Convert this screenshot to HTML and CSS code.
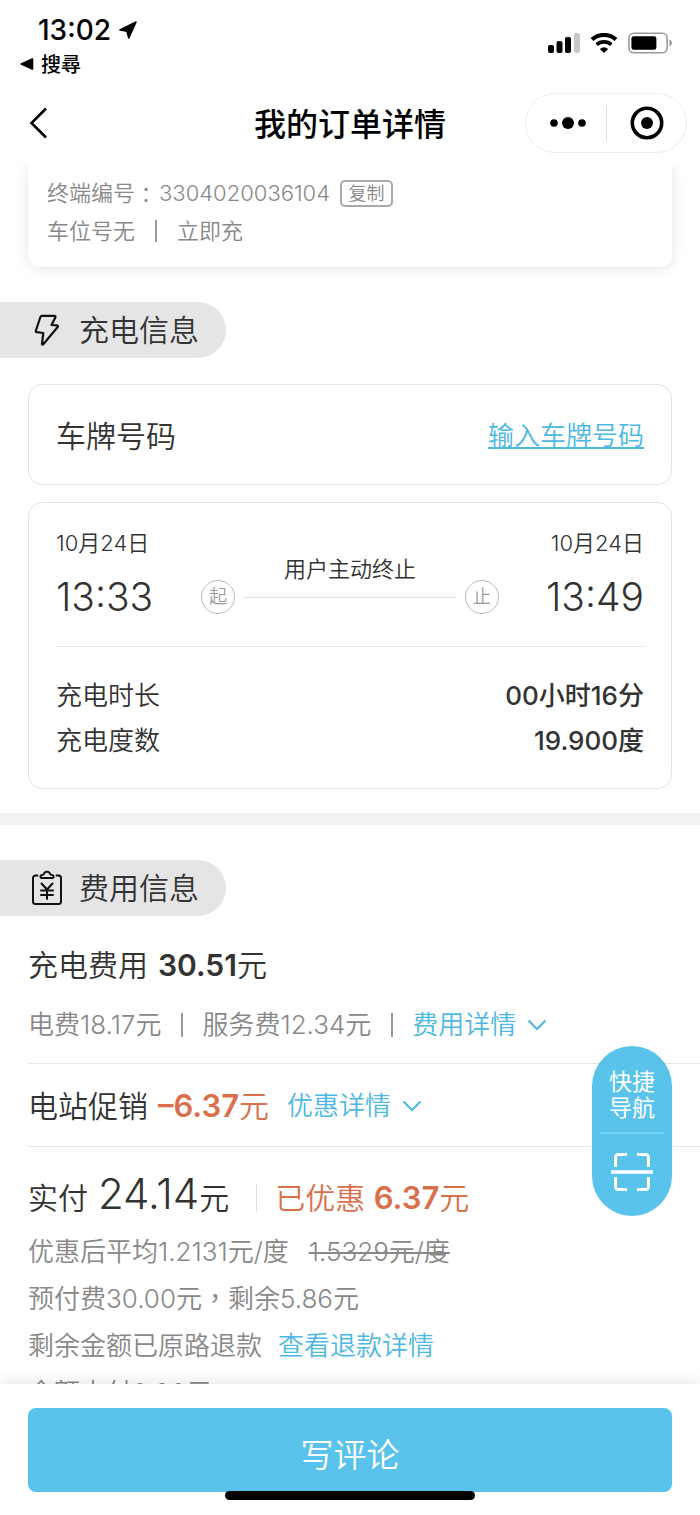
FILE: index.html
```html
<!DOCTYPE html>
<html lang="zh-CN">
<head>
<meta charset="utf-8">
<meta name="viewport" content="width=device-width, initial-scale=1">
<title>我的订单详情</title>
<link rel="stylesheet" href="styles.css">
</head>
<body>
<div class="app">
  <header class="header">
    <div class="status">
      <div class="status-left">
        <div class="clock">13:02
          <svg class="locate" viewBox="0 0 18 18" aria-hidden="true"><path d="M17 1 9.800 17 8 10.200 1 9z" stroke="#000" stroke-width="1.600" stroke-linejoin="round"/></svg>
        </div>
        <a class="back-app" href="#"><svg class="tri" viewBox="0 0 14 12" aria-hidden="true"><path d="M12.500 1v10L1.200 6z" stroke="#000" stroke-width="1.600" stroke-linejoin="round"/></svg>搜尋</a>
      </div>
      <div class="status-right" aria-hidden="true">
        <svg class="signal" viewBox="0 0 32 20"><rect x="0" y="12" width="6" height="8" rx="2"/><rect x="8.500" y="8" width="6" height="12" rx="2"/><rect x="17" y="4" width="6" height="16" rx="2"/><rect x="26" y="0" width="6" height="20" rx="2" fill="#c8c8c8"/></svg>
        <svg class="wifi" viewBox="0 0 28 20"><path d="M2 6.500a18 18 0 0 1 24 0" fill="none" stroke="#000" stroke-width="4"/><path d="M6.700 11.700a11 11 0 0 1 14.600 0" fill="none" stroke="#000" stroke-width="3.800"/><path d="M9.800 16a6.500 6.500 0 0 1 8.400 0L14 20z"/></svg>
        <svg class="battery" viewBox="0 0 46 22"><rect x="1" y="1" width="39" height="20" rx="5" fill="#fff" stroke="#999" stroke-width="1.600"/><rect x="3.500" y="4" width="25.500" height="14" rx="2.500"/><path d="M42.500 7.500c3 1.500 3 5.500 0 7z" fill="#888"/></svg>
      </div>
    </div>
    <div class="nav">
      <button class="back" aria-label="返回"><svg viewBox="0 0 20 32"><path d="M18 1.500 3.500 16 18 30.500" fill="none" stroke="#000" stroke-width="2.600"/></svg></button>
      <h1 class="title">我的订单详情</h1>
      <div class="capsule">
        <button class="cap-btn" aria-label="更多"><svg class="dots" viewBox="0 0 36 12"><circle cx="4" cy="6" r="3.800"/><circle cx="18" cy="6" r="6"/><circle cx="32" cy="6" r="3.800"/></svg></button>
        <button class="cap-btn cap-close" aria-label="关闭"><svg class="target" viewBox="0 0 34 34"><circle cx="17" cy="17" r="14.700" fill="none" stroke="#000" stroke-width="3.600"/><circle cx="17" cy="17" r="6"/></svg></button>
      </div>
    </div>
  </header>

  <main class="content">
    <section class="station">
      <div class="station-row">终端编号<span class="tc" lang="zh-TW">：</span><span class="code">3304020036104</span><button class="copy">复制</button></div>
      <div class="station-row">车位号无<i class="bar bar-wide"></i>立即充</div>
    </section>

    <h2 class="pill"><svg class="pill-icon" viewBox="0 0 32 36" aria-hidden="true"><path d="M11 3.800h12.200c1.200 0 1.600.6 1.100 1.600L20.500 13l5.200.4c1.300.1 1.600.9.800 1.800L12.300 32.300c-.8.8-1.500.4-1.300-.7l1.300-10.600-6.500-.8c-.9-.1-1.200-.8-.9-1.700L9.400 5c.3-.9.800-1.200 1.600-1.200z" fill="none" stroke="#111" stroke-width="2.200" stroke-linejoin="round"/></svg>充电信息</h2>

    <section class="card plate">
      <span class="label-lg">车牌号码</span>
      <a class="plate-link" href="#">输入车牌号码</a>
    </section>

    <section class="card session">
      <div class="times">
        <div class="point"><span class="date">10月24日</span><span class="time">13:33</span></div>
        <div class="track">
          <span class="badge">起</span>
          <div class="reason">用户主动终止</div>
          <span class="badge">止</span>
        </div>
        <div class="point point-end"><span class="date">10月24日</span><span class="time">13:49</span></div>
      </div>
      <dl class="stats">
        <div class="stat"><dt>充电时长</dt><dd>00小时16分</dd></div>
        <div class="stat"><dt>充电度数</dt><dd>19.900度</dd></div>
      </dl>
    </section>

    <div class="strip"></div>

    <h2 class="pill"><svg class="pill-icon" viewBox="0 0 32 36" aria-hidden="true"><g fill="none" stroke="#111" stroke-width="2" stroke-linecap="round" stroke-linejoin="round"><path d="M6.500 5.500H4.500A2.500 2.500 0 0 0 2 8v23.500A2.500 2.500 0 0 0 4.500 34h23a2.500 2.500 0 0 0 2.500-2.500V8A2.500 2.500 0 0 0 27.500 5.500h-2"/><path d="M10.500 8h11c1.500 0 1.500-2.600-.5-3-1-.3-1.700-.4-2-1.200-.8-2.600-5.200-2.600-6 0-.3.800-1 .9-2 1.200-2 .4-2 3-.5 3z"/><path d="m10.500 13.500 5.500 6 5.500-6M16 19.500V29M10 20.500h12M10 25h12"/></g></svg>费用信息</h2>

    <section class="fees">
      <div class="fee-block">
        <div class="fee-line">充电费用<span class="amount"><b>30.51</b>元</span></div>
        <div class="fee-sub">电费18.17元<i class="bar"></i>服务费12.34元<i class="bar"></i><a class="more" href="#">费用详情<svg class="chev" viewBox="0 0 20 12" aria-hidden="true"><path d="m1.500 1.500 8.500 8.500 8.500-8.500"/></svg></a></div>
      </div>
      <div class="fee-block promo">
        <div class="fee-line">电站促销<span class="amount orange"><b>–6.37</b>元</span><a class="more" href="#">优惠详情<svg class="chev" viewBox="0 0 20 12" aria-hidden="true"><path d="m1.500 1.500 8.500 8.500 8.500-8.500"/></svg></a></div>
      </div>
      <div class="paid">
        <div class="paid-line">实付<span class="total">24.14</span>元<span class="saved orange">已优惠 <b>6.37</b>元</span></div>
        <p class="note">优惠后平均1.2131元/度<s>1.5329元/度</s></p>
        <p class="note">预付费30.00元<span class="tc" lang="zh-TW">，</span>剩余5.86元</p>
        <p class="note">剩余金额已原路退款<a class="note-link" href="#">查看退款详情</a></p>
        <p class="note">余额支付0.00元</p>
      </div>
    </section>
  </main>

  <aside class="quick">
    <button class="quick-nav">快捷<br>导航</button>
    <button class="quick-scan" aria-label="扫码"><svg viewBox="0 0 44 38"><g fill="none" stroke="#fff" stroke-width="3"><path d="M17 1.500H8.500a3 3 0 0 0-3 3V14M27 1.500h8.500a3 3 0 0 1 3 3V14M17 36.500H8.500a3 3 0 0 1-3-3V24M27 36.500h8.500a3 3 0 0 0 3-3V24"/><path d="M1 19h42" stroke-width="3.400"/></g></svg></button>
  </aside>

  <footer class="footer">
    <button class="review">写评论</button>
    <div class="home"></div>
  </footer>
</div>
</body>
</html>
```
FILE: styles.css
```css
* { box-sizing: border-box; }

body {
  margin: 0;
  background: #fff;
  color: #333;
  font-family: Inter, "Noto Sans CJK SC", sans-serif;
  font-weight: 350;
}

h1, h2, p, dl, dd { margin: 0; }

button {
  margin: 0;
  padding: 0;
  border: 0;
  background: none;
  color: inherit;
  font: inherit;
}

a { color: #4db8e2; text-decoration: none; }
i { font-style: normal; }
svg { display: block; }
b { font-weight: 600; }

.app {
  position: relative;
  display: flex;
  flex-direction: column;
  height: 100vh;
  overflow: hidden;
}

/* Status bar and navigation */
.header { flex: none; color: #000; padding-bottom: 11px; }

.status {
  display: flex;
  justify-content: space-between;
  height: 93px;
  padding: 14px 27px 0 20px;
}

.clock {
  display: flex;
  align-items: center;
  gap: 8px;
  padding-left: 18px;
  font-size: 28px;
  font-weight: 500;
  line-height: 32px;
}

.locate { width: 18px; height: 18px; }

.back-app {
  display: flex;
  align-items: center;
  gap: 7px;
  color: #000;
  font-family: "Noto Sans CJK TC", sans-serif;
  font-size: 20px;
  font-weight: 500;
  line-height: 36px;
}

.tri { width: 14px; height: 12px; }

.status-right { display: flex; align-items: center; gap: 10px; height: 58px; }
.signal { width: 32px; height: 20px; }
.wifi { width: 28px; height: 20px; }
.battery { width: 45px; height: 22px; }

.nav {
  display: grid;
  grid-template-columns: 1fr auto 1fr;
  align-items: center;
  padding: 0 13px;
}

.back { justify-self: start; padding-left: 15px; }
.back svg { width: 20px; height: 32px; }
.title { padding-top: 4px; font-size: 32px; font-weight: 500; line-height: 48px; }

.capsule {
  justify-self: end;
  display: flex;
  align-items: center;
  width: 162px;
  height: 60px;
  border: 1px solid #ececec;
  border-radius: 30px;
}

.cap-btn {
  display: flex;
  align-items: center;
  justify-content: center;
  width: 80px;
  height: 36px;
  padding-left: 4px;
}

.cap-close { padding: 0; border-left: 1px solid #ddd; }
.dots { width: 36px; height: 12px; }
.target { width: 34px; height: 34px; }

/* Scrolled content */
.content { flex: 1; min-height: 0; overflow: hidden; }

.station {
  margin: 0 28px;
  padding: 10px 19px 17px;
  border-radius: 0 0 12px 12px;
  box-shadow: 0 2px 14px rgba(0, 0, 0, 0.1);
  color: #888;
  font-size: 22px;
}

.station-row { display: flex; align-items: center; line-height: 38px; }
.code { margin-left: 2px; }

.copy {
  width: 53px;
  margin-left: 10px;
  border: 2px solid #aaa;
  border-radius: 5px;
  font-size: 18px;
  line-height: 23px;
}

.bar { width: 2px; height: 24px; margin: 0 19px 0 20px; background: #999; }
.bar-wide { height: 22px; margin: 0 20px; }

.pill {
  display: flex;
  align-items: center;
  gap: 16px;
  width: 226px;
  height: 56px;
  margin-top: 35px;
  padding-left: 31px;
  border-radius: 0 28px 28px 0;
  background: #e5e5e5;
  font-size: 30px;
  font-weight: 350;
  line-height: 54px;
}

.pill-icon { width: 32px; height: 36px; }

.card {
  margin: 0 28px;
  border: 1px solid #e4e4e4;
  border-radius: 14px;
}

.plate {
  display: flex;
  align-items: center;
  justify-content: space-between;
  margin-top: 26px;
  padding: 30px 27px 27px;
  line-height: 42px;
}

.label-lg { font-size: 30px; }
.plate-link { font-size: 26px; text-decoration: underline; text-decoration-thickness: 2px; text-underline-offset: 2px; }

.session { margin-top: 17px; padding: 0 27px; }

.times {
  display: flex;
  justify-content: space-between;
  height: 144px;
  padding-top: 24px;
  border-bottom: 1px solid #e8e8e8;
}

.point { display: flex; flex-direction: column; width: 145px; }
.point-end { align-items: flex-end; }
.date { font-size: 22px; line-height: 32px; }
.time { font-size: 39px; line-height: 76px; }

.track {
  display: flex;
  align-items: flex-start;
  gap: 8px;
  flex: 1;
  padding-top: 22px;
}

.badge {
  width: 34px;
  height: 34px;
  margin-top: 31px;
  border: 1px solid #bbb;
  border-radius: 50%;
  color: #999;
  font-size: 18px;
  line-height: 32px;
  text-align: center;
}

.reason {
  flex: 1;
  height: 49px;
  border-bottom: 1px solid #e4e4e4;
  font-size: 22px;
  line-height: 40px;
  text-align: center;
}

.stats { padding: 26px 0 25px; font-size: 26px; line-height: 45px; }
.stat { display: flex; justify-content: space-between; }
.stat dd { font-weight: 500; }

.strip { height: 12px; margin-top: 24px; background: #f2f2f2; }

/* Fees */
.fees { padding-left: 28px; color: #333; }
.fee-block { border-bottom: 1px solid #e8e8e8; }

.fee-line {
  display: flex;
  align-items: center;
  padding-top: 24px;
  font-size: 30px;
  line-height: 50px;
}

.amount { margin-left: 10px; }
.orange { color: #d9704a; }
.orange b { font-size: 31px; line-height: 28px; }
.fee-sub { display: flex; align-items: center; padding: 11px 0 14px; color: #888; font-size: 26px; line-height: 48px; }
.more { display: flex; align-items: center; gap: 11px; font-size: 26px; }
.chev { width: 20px; height: 12px; fill: none; stroke: #4db8e2; stroke-width: 2; }
.promo .fee-line { padding: 17px 0 15px; }
.promo .more { margin-left: 18px; }

.paid-line { display: flex; align-items: baseline; padding-top: 21px; font-size: 30px; line-height: 60px; }
.total { margin-left: 10px; font-size: 42px; line-height: 42px; }
.saved { margin-left: 27px; padding-left: 18px; border-left: 1px solid #ddd; line-height: 28px; }

.note { color: #888; font-size: 26px; line-height: 47px; }
.note s { margin-left: 20px; text-decoration-thickness: 2px; }
.note-link { margin-left: 16px; }
.tc { font-family: "Noto Sans CJK TC", sans-serif; }
.note .tc { line-height: 26px; }

/* Floating shortcut */
.quick {
  position: absolute;
  right: 28px;
  bottom: 299px;
  z-index: 2;
  display: flex;
  flex-direction: column;
  width: 80px;
  height: 170px;
  padding: 0 8px;
  border-radius: 40px;
  background: #5ac3ec;
  color: #fff;
}

.quick-nav {
  height: 88px;
  padding-top: 12px;
  border-bottom: 2px solid #74d2f5;
  font-size: 23px;
  font-weight: 400;
  line-height: 26px;
}

.quick-scan { display: flex; justify-content: center; padding-top: 19px; }
.quick-scan svg { width: 44px; height: 38px; }

/* Bottom bar */
.footer {
  position: relative;
  flex: none;
  padding: 24px 28px 23px;
  background: #fff;
  box-shadow: 0 -2px 14px rgba(0, 0, 0, 0.1);
}

.review {
  display: block;
  width: 100%;
  height: 84px;
  padding-top: 6px;
  border-radius: 8px;
  background: #5ac3ec;
  color: #fff;
  font-size: 33px;
}

.home {
  position: absolute;
  bottom: 15px;
  left: 50%;
  width: 250px;
  height: 9px;
  margin-left: -125px;
  border-radius: 5px;
  background: #000;
}
```
